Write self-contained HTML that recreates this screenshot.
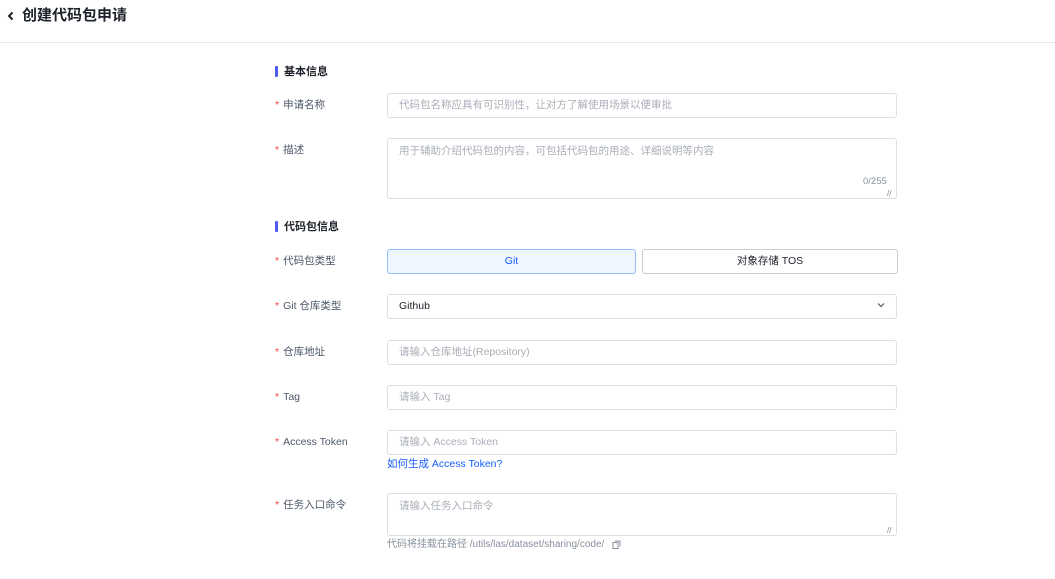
<!DOCTYPE html>
<html><head><meta charset="utf-8"><style>
*{box-sizing:border-box;margin:0;padding:0}
body{width:1055px;height:579px;background:#fff;font-family:"Liberation Sans","Noto Sans CJK SC",sans-serif;position:relative;overflow:hidden;color:#1d2129}
.a{position:absolute}
.hdr{left:0;top:0;width:1055px;height:43px;border-bottom:1px solid #e5e6eb}
.title{left:22px;top:6px;font-size:15px;font-weight:bold;color:#1d2129;line-height:20px}
.sec{font-size:11px;font-weight:bold;color:#1d2129;line-height:14px}
.bar{width:3px;height:11px;background:#4e5cf0;border-radius:1px}
.lbl{left:275px;font-size:10.5px;color:#4e5969;line-height:14px}
.lbl b{color:#f53f3f;font-weight:normal;margin-right:4px}
.box{left:387px;width:510px;border:1px solid #dcdfe6;border-radius:3px;font-size:10.5px;color:#a9aeb8;padding:0 11px;line-height:23px}
.ta{line-height:14px;padding-top:5px}
</style></head><body>
<div class="a hdr"></div>
<svg class="a" style="left:7px;top:11px" width="8" height="10" viewBox="0 0 8 10"><path d="M5.5 1.5 L2 5 L5.5 8.5" stroke="#1d2129" stroke-width="2" fill="none"/></svg>
<div class="a title">创建代码包申请</div>

<div class="a bar" style="left:275px;top:66px"></div>
<div class="a sec" style="left:284px;top:65px">基本信息</div>
<div class="a lbl" style="top:98px"><b>*</b>申请名称</div>
<div class="a box" style="top:93px;height:25px">代码包名称应具有可识别性，让对方了解使用场景以便审批</div>
<div class="a lbl" style="top:143px"><b>*</b>描述</div>
<div class="a box ta" style="top:138px;height:61px">用于辅助介绍代码包的内容，可包括代码包的用途、详细说明等内容</div>
<div class="a" style="left:863px;top:176px;font-size:9.5px;color:#86909c">0/255</div>
<div class="a" style="left:887px;top:189px;font-size:8px;color:#888">//</div>

<div class="a bar" style="left:275px;top:221px"></div>
<div class="a sec" style="left:284px;top:220px">代码包信息</div>
<div class="a lbl" style="top:254px"><b>*</b>代码包类型</div>
<div class="a" style="left:387px;top:249px;width:249px;height:25px;border:1px solid #94bfff;background:#f0f6ff;border-radius:3px;text-align:center;font-size:10.5px;line-height:23px;color:#165dff">Git</div>
<div class="a" style="left:642px;top:249px;width:256px;height:25px;border:1px solid #c9cdd4;border-radius:3px;text-align:center;font-size:10.5px;line-height:23px;color:#1d2129">对象存储 TOS</div>
<div class="a lbl" style="top:299px"><b>*</b>Git 仓库类型</div>
<div class="a box" style="top:294px;height:25px;color:#1d2129">Github</div>
<svg class="a" style="left:876px;top:301px" width="10" height="8" viewBox="0 0 10 8"><path d="M2 2.5 L5 5.5 L8 2.5" stroke="#4e5969" stroke-width="1.2" fill="none"/></svg>
<div class="a lbl" style="top:345px"><b>*</b>仓库地址</div>
<div class="a box" style="top:340px;height:25px">请输入仓库地址(Repository)</div>
<div class="a lbl" style="top:390px"><b>*</b>Tag</div>
<div class="a box" style="top:385px;height:25px">请输入 Tag</div>
<div class="a lbl" style="top:435px"><b>*</b>Access Token</div>
<div class="a box" style="top:430px;height:25px">请输入 Access Token</div>
<div class="a" style="left:387px;top:457px;font-size:10.5px;color:#165dff;line-height:14px">如何生成 Access Token?</div>
<div class="a lbl" style="top:498px"><b>*</b>任务入口命令</div>
<div class="a box ta" style="top:493px;height:43px">请输入任务入口命令</div>
<div class="a" style="left:887px;top:526px;font-size:8px;color:#888">//</div>
<div class="a" style="left:387px;top:538px;font-size:10px;color:#86909c;line-height:13px">代码将挂载在路径 /utils/las/dataset/sharing/code/</div>
<svg class="a" style="left:612px;top:540px" width="9" height="9" viewBox="0 0 9 9"><rect x="1" y="2.5" width="5" height="6" fill="none" stroke="#86909c"/><path d="M3 1 H8 V6.5" fill="none" stroke="#86909c"/></svg>
</body></html>
